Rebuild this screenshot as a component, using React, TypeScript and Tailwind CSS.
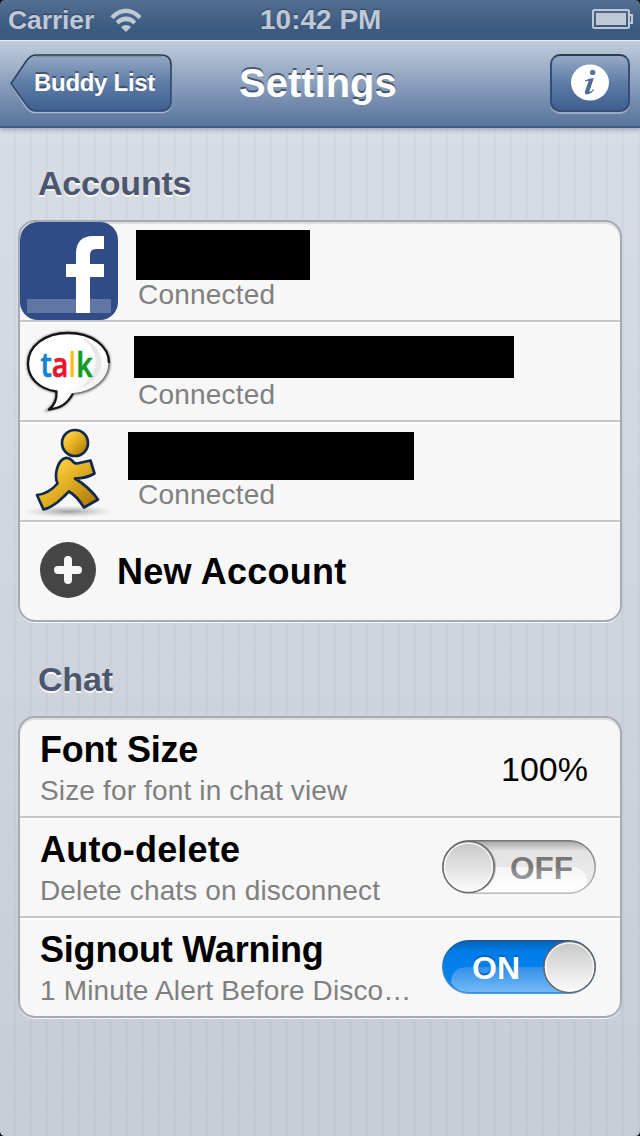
import type { ReactNode } from "react";

function StatusBar() {
  return (
    <div className="relative flex h-10 items-center justify-between bg-linear-to-b from-[#536f92] to-[#3d5a80] to-70% pl-2 pr-[6px] text-[#bfc9d6] [text-shadow:0_-1px_1px_rgba(20,35,60,0.6)]">
      <div className="flex items-center">
        <span className="w-[100px] whitespace-nowrap text-[26.5px] font-bold leading-[40px] tracking-[-0.1px]">Carrier</span>
        <svg width="36" height="26" viewBox="108 6 36 26" fill="#bfc9d6">
          <path d="M110.500 15.300C119 5.200 133 5.200 141.500 15.300L138.500 18.300C131 9.900 121 9.900 113.500 18.300Z" />
          <path d="M115.700 20.400C121.500 13.900 130.500 13.900 136.300 20.400L133.200 23.400C129 19.100 123 19.100 118.800 23.400Z" />
          <path d="M121 26C123.800 23.300 128.200 23.300 131 26L126 31Z" />
        </svg>
      </div>
      <svg width="43" height="22" viewBox="0 0 43 22" fill="none" stroke="#bfc9d6" strokeWidth="2">
        <rect x="2" y="1" width="36" height="18" rx="1.500" />
        <rect x="5" y="4" width="30" height="12" fill="#bfc9d6" stroke="none" />
        <path d="M38 6h3v8h-3" />
      </svg>
      <span className="absolute left-[260px] top-0 whitespace-nowrap text-[28px] font-bold leading-[40px]">10:42 PM</span>
      <svg className="absolute left-0 top-0" width="6" height="6"><path d="M0 0H5Q0 0 0 5Z" fill="#000" /></svg>
      <svg className="absolute right-0 top-0" width="6" height="6"><path d="M6 0H1Q6 0 6 5Z" fill="#000" /></svg>
    </div>
  );
}

function NavBar() {
  return (
    <div className="relative z-10 grid h-[88px] grid-cols-[162px_1fr_80px] border-b-2 border-t border-t-[#e6edf5] border-b-[#3d5b85] bg-linear-to-b from-[#c0cddd] via-[#8a9fbd] to-[#58749b] px-[10px] shadow-[0_2px_4px_rgba(60,70,90,0.35)]">
      <div className="relative mt-[13px] h-[60px]">
        <svg width="162" height="60" viewBox="0 0 162 60">
          <defs>
            <linearGradient id="button" x1="0" y1="0" x2="0" y2="1">
              <stop offset="0" stopColor="#97a9c4" />
              <stop offset="0.5" stopColor="#5e7ca6" />
              <stop offset="1" stopColor="#3e5f91" />
            </linearGradient>
            <linearGradient id="edge" x1="0" y1="0" x2="0" y2="1">
              <stop offset="0" stopColor="#30394a" />
              <stop offset="1" stopColor="#304d7b" />
            </linearGradient>
          </defs>
          <path d="M25 2.500H151Q161 2.500 161 12.500V48.500Q161 58.500 151 58.500H25Q20 58.500 16 53L1 30.500L16 8Q20 2.500 25 2.500Z" fill="none" stroke="#aab9cf" strokeWidth="1.500" />
          <path d="M26 1H151Q161 1 161 11V47Q161 57 151 57H26Q21 57 17 52L1 29.500L17 6Q21 1 26 1Z" fill="url(#button)" stroke="url(#edge)" strokeWidth="1.600" />
          <path d="M26 2.800H151" stroke="#303b4e" strokeOpacity=".3" />
        </svg>
        <span className="absolute left-6 top-[9px] whitespace-nowrap text-[24px] font-bold leading-[40px] tracking-[-0.3px] text-white [text-shadow:0_-2px_0_rgba(40,55,80,0.65)]">Buddy List</span>
      </div>
      <h1 className="pl-[67px] pt-[22px] text-[40px] font-bold leading-[40px] text-white [text-shadow:0_-2px_0_rgba(50,62,85,0.8)]">Settings</h1>
      <div className="mt-[13px] flex h-[58px] w-20 items-center justify-center rounded-[10px] border-2 border-[#334d76] border-t-[#303b4e] bg-linear-to-b from-[#97a9c4] via-[#5e7ca6] to-[#3e5f91] shadow-[0_2px_0_rgba(175,190,210,0.7)]">
        <svg width="40" height="40" viewBox="0 0 40 40">
          <ellipse cx="20" cy="19.500" rx="19" ry="18" fill="#fff" />
          <circle cx="22.700" cy="9.400" r="2.700" fill="#56749e" />
          <path d="M15 17.600C18 16 21 14.900 23.700 15.400L19.500 28Q19 30.300 23.200 26.300L24 27.100C20.500 31.500 14 33.800 15 28.200L18.600 18.300Q18.700 16.900 15.500 18.600Z" fill="#4c6b98" />
        </svg>
      </div>
    </div>
  );
}

function Section({ title, children }: { title: string; children: ReactNode }) {
  return (
    <section>
      <h2 className="mb-[16px] pl-5 text-[34px] font-bold leading-[42px] tracking-[-0.2px] text-[#4c566c] [text-shadow:0_2px_0_#f7f9fc]">{title}</h2>
      <div className="overflow-hidden rounded-[17px] border-2 border-[#a5aab4] bg-[#f7f7f7] shadow-[0_1px_0_rgba(245,247,250,0.9),inset_0_2px_1px_rgba(0,0,0,0.1)]">{children}</div>
    </section>
  );
}

const rowLine = "border-b-2 border-[#c6c6c6] shadow-[inset_0_2px_0_#fff]";

function Account({ icon, mask }: { icon: ReactNode; mask: string }) {
  return (
    <div className="flex h-[100px] border-b-2 border-[#c6c6c6] not-first:shadow-[inset_0_2px_0_#fff]">
      <div className="h-[98px] w-[98px] shrink-0">{icon}</div>
      <div className="flex flex-col">
        <div className={"shrink-0 bg-black " + mask} />
        <span className="mb-[10px] ml-5 mt-auto h-[30px] text-[28px] leading-[30px] tracking-[0.2px] text-[#808080]">Connected</span>
      </div>
    </div>
  );
}

function FacebookIcon() {
  return (
    <svg width="98" height="98" viewBox="0 0 98 98">
      <rect width="98" height="98" rx="18" fill="#304b86" />
      <path d="M7 77H91V91H7Z" fill="#6077a6" />
      <path d="M56 91V55H46V42H56V32Q56 14 73 14H84V27H76Q70 27 70 33V42H84V55H70V91Z" fill="#fff" />
    </svg>
  );
}

function TalkIcon() {
  return (
    <svg width="98" height="98" viewBox="20 322 98 98">
      <defs>
        <linearGradient id="bubble" x1="0" y1="0" x2="1" y2="1">
          <stop offset=".6" stopColor="#fff" />
          <stop offset="1" stopColor="#dedede" />
        </linearGradient>
        <filter id="soft"><feGaussianBlur stdDeviation="0.900" /></filter>
      </defs>
      <path d="M56.500 391.500C39 389 28 378 28 363.500C28 346 45 333 68 333C92 333 109 346 109 363C109 379 94 392 73 393.500C67 404 61 408 49 409.500C56 404 57 398 56.500 391.500Z" fill="none" stroke="#777" strokeWidth="3" filter="url(#soft)" />
      <path d="M56.500 391.500C39 389 28 378 28 363.500C28 346 45 333 68 333C92 333 109 346 109 363C109 379 94 392 73 393.500C67 404 61 408 49 409.500C56 404 57 398 56.500 391.500Z" fill="url(#bubble)" />
      <path d="M82 338C111 349 106 380 79 389C100 371 101 354 82 338Z" fill="#e8e8e8" />
      <path d="M73 393.500C94 392 109 379 109 363" fill="none" stroke="#777" strokeWidth="1.200" />
      <path d="M109 363C109 346 92 333 68 333C45 333 28 346 28 363.500C28 378 39 389 56.500 391.500C57 398 56 404 49 409.500C61 408 67 404 73 393.500" fill="none" stroke="#151515" strokeWidth="2.300" strokeLinejoin="round" />
      <text transform="translate(40.500 376.500) scale(.84 1)" fontSize="34" fontWeight="600" fontFamily="Open Sans"><tspan fill="#1683cd" stroke="#1683cd" strokeWidth=".7">t</tspan><tspan fill="#ed142f" stroke="#ed142f" strokeWidth=".7">a</tspan><tspan fill="#fbbf19">l</tspan><tspan fill="#139a27" stroke="#139a27" strokeWidth=".7">k</tspan></text>
    </svg>
  );
}

function RunnerIcon() {
  return (
    <svg width="98" height="98" viewBox="20 422 98 98">
      <defs>
        <linearGradient id="gold" x1="0" y1="0" x2="1" y2="1">
          <stop offset=".2" stopColor="#ffcf40" />
          <stop offset=".55" stopColor="#dba91f" />
          <stop offset="1" stopColor="#a66c00" />
        </linearGradient>
        <radialGradient id="shadow"><stop stopColor="#777" stopOpacity=".7" /><stop offset="1" stopColor="#aaa" stopOpacity="0" /></radialGradient>
      </defs>
      <ellipse cx="69" cy="511.500" rx="46" ry="6" fill="url(#shadow)" />
      <circle cx="75" cy="443" r="13" fill="url(#gold)" stroke="#10294d" strokeWidth="2.700" />
      <path d="M77 463.500L90.500 460.500L94.500 473.500C88 477.500 82 478.500 75 478.500C84 484 92 491 98 499.500L84 507.500C80 501 75 495 69 491.500C61 499 54 507 43.500 509.500L37 495C46 494 52 490 57.500 483.500C54 476 57 462 64 458.500Q68 456.500 72 460.500Q74 463.500 77 463.500Z" fill="url(#gold)" stroke="#10294d" strokeWidth="2.700" strokeLinejoin="round" />
    </svg>
  );
}

function Labels({ title, note, spacing }: { title: string; note: string; spacing: string }) {
  return (
    <div className="flex flex-col whitespace-nowrap pt-[11px]">
      <span className={"text-[36px] font-bold leading-[42px] text-black " + spacing}>{title}</span>
      <span className="pt-px text-[28px] leading-[38px] tracking-[0.15px] text-[#808080]">{note}</span>
    </div>
  );
}

function Toggle({ on }: { on: boolean }) {
  const id = on ? "on" : "off";
  return (
    <svg className="mt-[18px] shrink-0 self-start" width="154" height="58" viewBox="0 -4 154 58" role="switch" aria-checked={on}>
      <defs>
        <linearGradient id={id + "-track"} x1="0" y1="0" x2="0" y2="1">
          <stop offset="0" stopColor={on ? "#0563ba" : "#a5a5a5"} />
          <stop offset=".2" stopColor={on ? "#007ce8" : "#e3e3e3"} />
          <stop offset="1" stopColor={on ? "#0788ef" : "#f0f0f0"} />
        </linearGradient>
        <linearGradient id={id + "-gloss"} x1="0" y1="0" x2="0" y2="1">
          <stop offset="0" stopColor={on ? "#328fe9" : "#f6f6f6"} />
          <stop offset="1" stopColor={on ? "#74b9f7" : "#fff"} />
        </linearGradient>
        <linearGradient id={id + "-knob"} x1="0" y1="0" x2="0" y2="1">
          <stop offset="0" stopColor="#c7c7c7" /><stop offset="1" stopColor="#fcfcfc" />
        </linearGradient>
        <linearGradient id={id + "-rim"} x1="0" y1="0" x2="0" y2="1">
          <stop stopColor={on ? "#16569a" : "#757575"} /><stop offset="1" stopColor={on ? "#559cdf" : "#bdbdbd"} />
        </linearGradient>
        <linearGradient id={id + "-word"} x1="0" y1="0" x2="0" y2="1">
          <stop offset=".5" stopColor="#777" /><stop offset=".52" stopColor="#858585" /><stop offset="1" stopColor="#aaa" />
        </linearGradient>
      </defs>
      <rect x=".8" y=".8" width="152.400" height="52.400" rx="26.200" fill={`url(#${id}-track)`} />
      <path d={on ? "M9 43Q9 27 27 27H126V52H26Q15 52 9 43Z" : "M30 27H131Q145 29 145 44Q138 52 128 52H30Z"} fill={`url(#${id}-gloss)`} />
      <rect x=".8" y=".8" width="152.400" height="52.400" rx="26.200" fill="none" stroke={`url(#${id}-rim)`} strokeWidth="1.500" />
      <text x={on ? 30 : 68} y="39" fontFamily="Liberation Sans" fontSize="32" fontWeight="bold" textLength={on ? 48 : 63} lengthAdjust="spacingAndGlyphs" fill={on ? "#fff" : "url(#off-word)"} style={{ textShadow: on ? "0 -2px 1px #0864b5" : "none" }}>{on ? "ON" : "OFF"}</text>
      <circle cx={on ? 127 : 28} cy="27" r="26" fill="#333" opacity=".3" />
      <circle cx={on ? 127.5 : 26.5} cy="27" r="25.500" fill={`url(#${id}-knob)`} stroke="#686868" strokeWidth="1.500" />
      <circle cx={on ? 127.5 : 26.5} cy="27" r="24" fill="none" stroke="#fff" strokeOpacity=".75" strokeWidth="1.500" />
    </svg>
  );
}

export default function App() {
  return (
    <div className="relative h-[1136px] w-[640px] overflow-hidden bg-[linear-gradient(90deg,transparent_13px,rgba(100,115,145,0.045)_13px),linear-gradient(#d9dee7,#c7ccd5)] bg-[length:16px_100%,100%_100%] font-['Liberation_Sans',Arial,sans-serif]">
      <StatusBar />
      <NavBar />
      <main className="flex flex-col gap-9 px-[18px] pt-[34px]">
        <Section title="Accounts">
          <Account icon={<FacebookIcon />} mask="mt-[8px] ml-[18px] h-[50px] w-[174px]" />
          <Account icon={<TalkIcon />} mask="mt-[14px] ml-[16px] h-[42px] w-[380px]" />
          <Account icon={<RunnerIcon />} mask="mt-[10px] ml-[10px] h-[48px] w-[286px]" />
          <div className="flex h-[98px] items-center pl-5 shadow-[inset_0_2px_0_#fff]">
            <svg className="mr-[21px] -mt-[3px]" width="56" height="56" viewBox="0 0 56 56">
              <circle cx="28" cy="28" r="28" fill="#454545" />
              <path d="M28 18V38M18 28H38" stroke="#f7f7f7" strokeWidth="8" strokeLinecap="round" />
            </svg>
            <span className="pt-[2px] text-[36px] font-bold leading-[42px] tracking-[0.25px] text-black">New Account</span>
          </div>
        </Section>
        <Section title="Chat">
          <div className="flex h-[100px] justify-between border-b-2 border-[#c6c6c6] px-5">
            <Labels title="Font Size" note="Size for font in chat view" spacing="tracking-[-0.2px]" />
            <span className="mr-[12px] mt-[31px] text-[34px] leading-[40px] text-black">100%</span>
          </div>
          <div className={"flex h-[100px] justify-between pl-5 pr-6 " + rowLine}>
            <Labels title="Auto-delete" note="Delete chats on disconnect" spacing="tracking-[0.2px]" />
            <Toggle on={false} />
          </div>
          <div className="flex h-[98px] justify-between pl-5 pr-6 shadow-[inset_0_2px_0_#fff]">
            <Labels title="Signout Warning" note="1 Minute Alert Before Disco…" spacing="tracking-[-0.2px]" />
            <Toggle on />
          </div>
        </Section>
      </main>
      <svg className="absolute bottom-0 left-0" width="5" height="5"><path d="M0 0Q0 5 5 5H0Z" /></svg>
      <svg className="absolute bottom-0 right-0" width="5" height="5"><path d="M5 0Q5 5 0 5H5Z" /></svg>
    </div>
  );
}
